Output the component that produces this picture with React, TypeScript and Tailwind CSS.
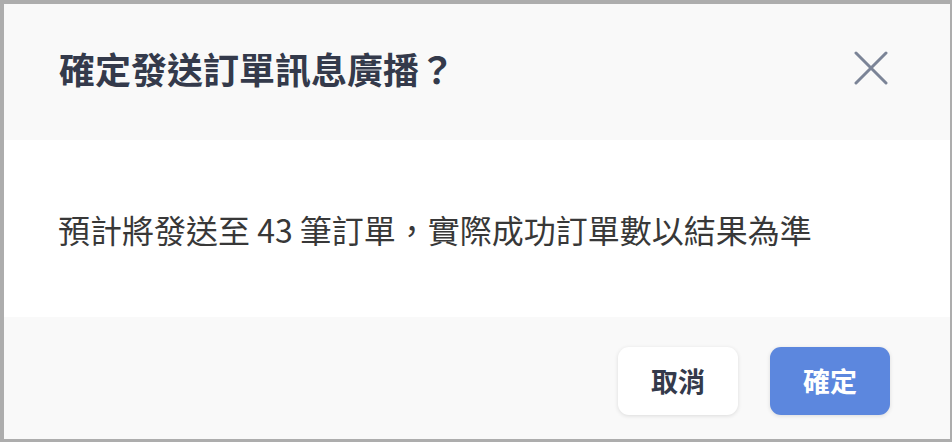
import React from "react";

const FONT = { fontFamily: '"Noto Sans CJK TC", "Noto Sans", sans-serif' };

function CloseIcon() {
  return (
    <svg width="34" height="34" viewBox="0 0 34 34" fill="none" aria-hidden="true">
      <path d="M2 2 L32 32 M32 2 L2 32" stroke="#7b8497" strokeWidth="3" strokeLinecap="round" />
    </svg>
  );
}

export default function App() {
  return (
    <div
      className="w-[952px] h-[442px] flex flex-col border-l-4 border-t-4 border-r-2 border-b-[3px] border-[#adadad] bg-[#f9f9f9]"
      style={FONT}
    >
      <div className="h-[136px] flex items-center justify-between pl-[55px] pr-[62px] pb-[8px] bg-[#f9f9f9]">
        <h2 className="text-[36px] leading-none font-bold text-[#343a4b]">確定發送訂單訊息廣播？</h2>
        <button className="w-[34px] h-[34px] flex items-center justify-center">
          <CloseIcon />
        </button>
      </div>
      <div className="h-[177px] bg-white flex items-center pl-[54px]">
        <p className="text-[32px] leading-none text-[#383838]">預計將發送至 43 筆訂單，實際成功訂單數以結果為準</p>
      </div>
      <div className="flex-1 bg-[#f9f9f9] flex justify-end items-start pt-[30px] pr-[60px] gap-[32px]">
        <button className="w-[120px] h-[68px] rounded-[11px] bg-white shadow-[0_1px_4px_rgba(0,0,0,0.12)] text-[27px] font-bold text-[#343a4b]">
          取消
        </button>
        <button className="w-[120px] h-[68px] rounded-[11px] bg-[#5c87de] shadow-[0_1px_4px_rgba(0,0,0,0.12)] text-[27px] font-bold text-white">
          確定
        </button>
      </div>
    </div>
  );
}
